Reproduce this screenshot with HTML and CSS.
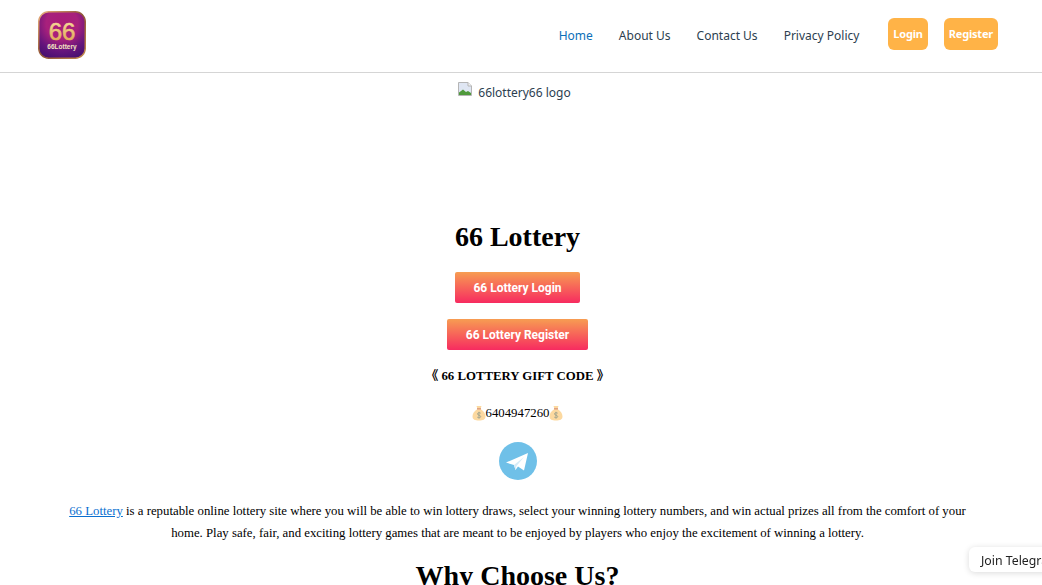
FILE: index.html
```html
<!DOCTYPE html>
<html lang="en">

<head>
    <meta charset="UTF-8">
    <meta name="viewport" content="width=device-width, initial-scale=1.0">
    <title>66 Lottery</title>
    <link rel="stylesheet" href="styles.css">
</head>

<body>

    <header class="site-header">
        <a class="brand" href="#">
            <svg width="48" height="48" viewBox="0 0 48 48">
                <defs>
                    <radialGradient id="tile" cx="0.5" cy="0.25" r="0.85">
                        <stop offset="0" stop-color="#a81c78"></stop>
                        <stop offset="0.4" stop-color="#a8207c"></stop>
                        <stop offset="0.7" stop-color="#66157c"></stop>
                        <stop offset="1" stop-color="#3f0f6e"></stop>
                    </radialGradient>
                    <linearGradient id="rim" x1="0" y1="0" x2="1" y2="1">
                        <stop offset="0" stop-color="#eab07e"></stop>
                        <stop offset="0.5" stop-color="#8f5436"></stop>
                        <stop offset="1" stop-color="#c48a4e"></stop>
                    </linearGradient>
                    <linearGradient id="gold" x1="0" y1="0" x2="0" y2="1">
                        <stop offset="0" stop-color="#fbe3a6"></stop>
                        <stop offset="1" stop-color="#dca24a"></stop>
                    </linearGradient>
                </defs>
                <rect x="0.75" y="0.75" width="46.5" height="46.5" rx="10" fill="url(#tile)" stroke="url(#rim)" stroke-width="1.5"></rect>
                <text class="logo-big" x="24" y="28.500" text-anchor="middle" fill="url(#gold)" stroke="url(#gold)">66</text>
                <text class="logo-small" x="24" y="37.500" text-anchor="middle">66Lottery</text>
            </svg>
        </a>
        <nav class="main-nav">
            <a class="active" href="#">Home</a>
            <a href="#">About Us</a>
            <a href="#">Contact Us</a>
            <a href="#">Privacy Policy</a>
        </nav>
        <div class="header-btns">
            <a class="head-btn" href="#">Login</a>
            <a class="head-btn" href="#">Register</a>
        </div>
    </header>

    <main class="content">
        <div class="broken-img">
            <svg width="14" height="14" viewBox="0 0 14 14">
                <path d="M.5 .5H10L13.500 4V13.500H.5Z" fill="#dfe6f3" stroke="#b5b5b5"></path>
                <path d="M10 .5V4H13.500" fill="#f4f4f4" stroke="#b5b5b5"></path>
                <path d="M1 13V10.500L5 7.500L8 10L10 9L13 11V13Z" fill="#4f9a3c"></path>
            </svg>
            <span>66lottery66 logo</span>
        </div>

        <h1>66 Lottery</h1>
        <p class="cta"><a class="grad-btn" href="#">66 Lottery Login</a></p>
        <p class="cta"><a class="grad-btn" href="#">66 Lottery Register</a></p>
        <p class="gift"><strong>《 66 LOTTERY GIFT CODE 》</strong></p>
        <p class="code">
            <svg class="bag" width="14" height="16" viewBox="0 0 14 16">
                <path d="M4.5 1H9.5L8.5 4C12 6 13.500 9 13.500 11.500C13.500 14.500 11 15.500 7 15.500C3 15.500 .5 14.500 .5 11.500C.5 9 2 6 5.500 4Z" fill="#fcd9a0"></path>
                <path d="M5 3.800H9" stroke="#e0a080" stroke-width="1.500"></path>
                <path d="M8.700 8.200C7.500 7.300 5.500 7.600 5.500 9C5.500 10.500 8.700 10 8.700 11.500C8.700 12.900 6.500 13 5.300 12.200M7 6.800V13.500" fill="none" stroke="#a3a58e"></path>
            </svg>6404947260<svg class="bag" width="14" height="16" viewBox="0 0 14 16">
                <path d="M4.5 1H9.5L8.5 4C12 6 13.500 9 13.500 11.500C13.500 14.500 11 15.500 7 15.500C3 15.500 .5 14.500 .5 11.500C.5 9 2 6 5.500 4Z" fill="#fcd9a0"></path>
                <path d="M5 3.800H9" stroke="#e0a080" stroke-width="1.500"></path>
                <path d="M8.700 8.200C7.500 7.300 5.500 7.600 5.500 9C5.500 10.500 8.700 10 8.700 11.500C8.700 12.900 6.500 13 5.300 12.200M7 6.800V13.500" fill="none" stroke="#a3a58e"></path>
            </svg>
        </p>
        <a class="tg-link" href="#">
            <svg width="38" height="38" viewBox="0 0 38 38">
                <circle cx="19" cy="19" r="19" fill="#6fc0e8"></circle>
                <path d="M7 20.500L29 11L25 28.500L19 24.500L16.500 28L15 23Z" fill="#fff"></path>
                <path d="M15 23L25 15L17.500 24L16.500 28Z" fill="#d5ebf7"></path>
            </svg>
        </a>
        <p class="intro"><a href="#">66 Lottery</a> is a reputable online lottery site where you will be able to win lottery draws, select your winning lottery numbers, and win actual prizes all from the comfort of your home. Play safe, fair, and exciting lottery games that are meant to be enjoyed by players who enjoy the excitement of winning a lottery.</p>
        <h2>Why Choose Us?</h2>
    </main>

    <div class="tg-float">Join Telegram</div>

</body>

</html>
```

FILE: styles.css
```css
html, body {
    height: 100%;
    overflow: hidden;
}

body {
    margin: 0;
    background: #fff;
    color: #000;
    font-family: "Liberation Serif", "Noto Sans CJK SC", serif;
    font-size: 12.8px;
}

.site-header {
    display: flex;
    align-items: center;
    height: 70px;
    padding: 0 44px 2px 38px;
    border-bottom: 1px solid #d5d5d5;
    font-family: "Noto Sans", sans-serif;
}

.brand {
    display: flex;
    margin-right: auto;
}

.logo-big {
    font-family: "Liberation Sans", sans-serif;
    font-size: 24px;
    stroke-width: 0.6px;
}

.logo-small {
    font-family: "Liberation Sans", sans-serif;
    font-size: 6.5px;
    font-weight: 700;
    fill: #f6e3c2;
}

.main-nav {
    display: flex;
    gap: 26px;
}

.main-nav a {
    color: #2c3e50;
    font-size: 12px;
    text-decoration: none;
}

.main-nav a.active {
    color: #0b6fb8;
}

.header-btns {
    display: flex;
    gap: 16px;
    margin: 0 0 2px 29px;
}

.head-btn {
    padding: 7px 5px;
    background: #ffb347;
    border-radius: 6px;
    color: #fff;
    font-size: 11px;
    font-weight: 700;
    letter-spacing: -0.2px;
    line-height: 18px;
    text-decoration: none;
}

.content {
    padding: 0 67px 0 60px;
    text-align: center;
}

.broken-img {
    display: flex;
    justify-content: center;
    gap: 6px;
    height: 122px;
    padding: 9px 6px 0 0;
    font-family: "Noto Sans", sans-serif;
    font-size: 12px;
    line-height: 22px;
    color: #2c3e50;
}

h1, h2 {
    margin: 0;
    font-size: 28px;
    line-height: 32px;
}

h1 {
    margin-top: 17px;
}

.cta {
    margin: 19px 0 0;
    line-height: 0;
}

.cta + .cta {
    margin-top: 16px;
}

.grad-btn {
    display: inline-block;
    padding: 1px 18.5px 0;
    background: linear-gradient(#f79d52, #f72b60);
    border-radius: 2px;
    color: #fff;
    font-family: Roboto, sans-serif;
    font-size: 12px;
    font-weight: 700;
    line-height: 30px;
    text-decoration: none;
}

.gift {
    margin: 17px 0 0;
    line-height: 18px;
}

.code {
    display: flex;
    justify-content: center;
    align-items: center;
    margin: 19px 0 0;
    line-height: 18px;
}

.tg-link {
    display: block;
    width: 38px;
    height: 38px;
    margin: 20px auto 0;
}

.intro {
    margin: 20px 0 0;
    line-height: 22px;
}

.intro a {
    color: #0b6fd0;
}

h2 {
    margin-top: 16px;
}

.tg-float {
    position: fixed;
    left: 969px;
    top: 547px;
    padding: 2px 12px 0;
    background: #fff;
    border-radius: 6px 0 0 6px;
    box-shadow: 0 1px 6px rgba(0, 0, 0, 0.15);
    color: #222;
    font-family: "Noto Sans", sans-serif;
    font-size: 12.3px;
    line-height: 23px;
    white-space: nowrap;
}
```
